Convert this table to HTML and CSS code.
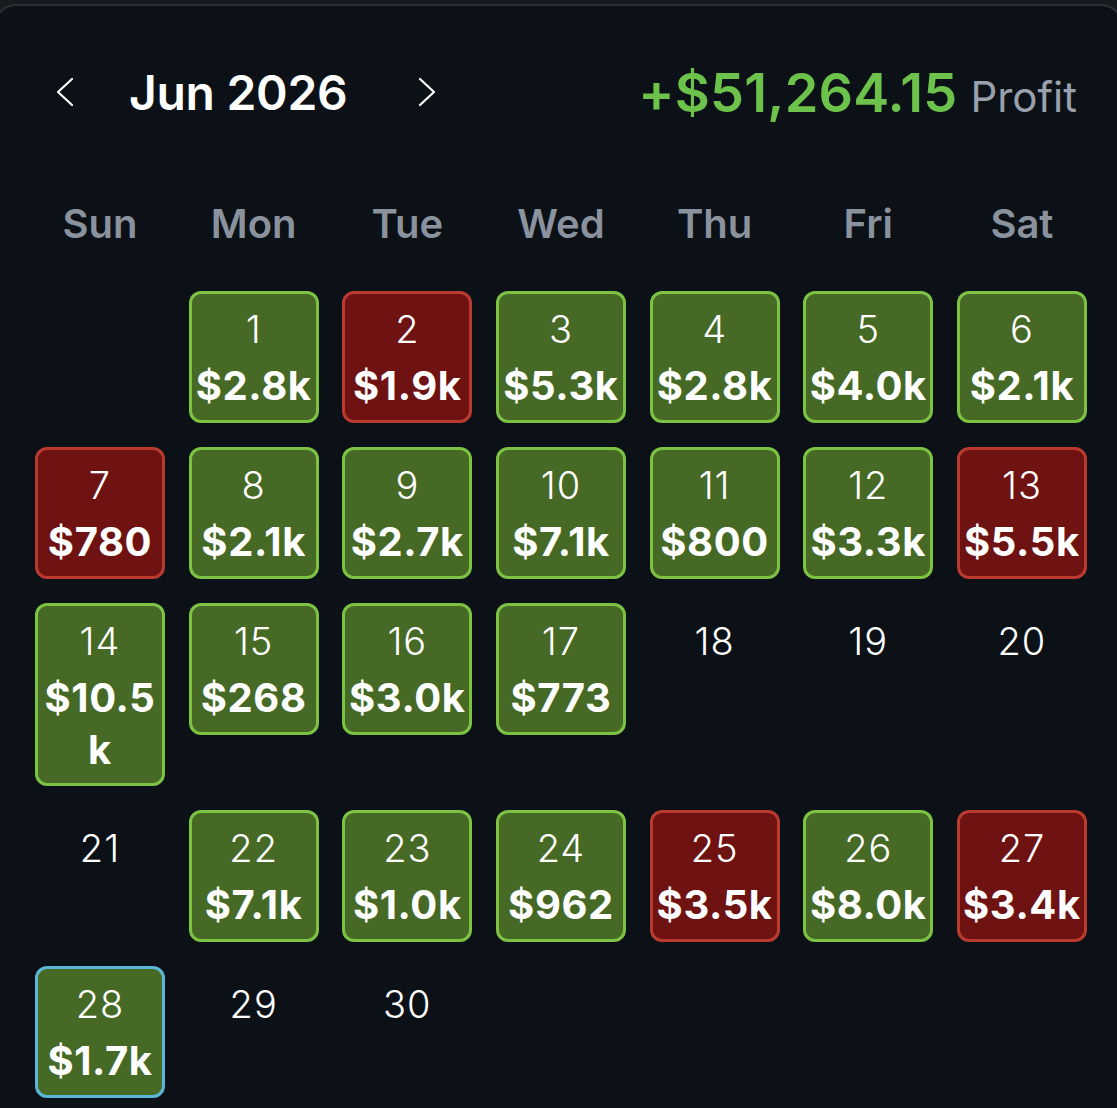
FILE: index.html
```html
<!DOCTYPE html>
<html lang="en">
<head>
<meta charset="utf-8">
<title>Jun 2026 Calendar</title>
<link rel="stylesheet" href="styles.css">
</head>
<body>
<div class="card">
  <header class="head">
    <div class="nav">
      <button class="chev" aria-label="Previous month">
        <svg width="20" height="30" viewBox="0 0 20 30"><polyline points="17,2 3,15 17,28" fill="none" stroke="#fff" stroke-width="2.2" stroke-linecap="round" stroke-linejoin="round"/></svg>
      </button>
      <h1 class="title">Jun 2026</h1>
      <button class="chev" aria-label="Next month">
        <svg width="20" height="30" viewBox="0 0 20 30"><polyline points="3,2 17,15 3,28" fill="none" stroke="#fff" stroke-width="2.2" stroke-linecap="round" stroke-linejoin="round"/></svg>
      </button>
    </div>
    <div class="total"><span class="amount">+$51,264.15</span><span class="label">Profit</span></div>
  </header>

  <div class="weekdays">
    <span>Sun</span><span>Mon</span><span>Tue</span><span>Wed</span><span>Thu</span><span>Fri</span><span>Sat</span>
  </div>

  <div class="grid">
    <div class="day blank"></div>
    <div class="day win"><span class="num">1</span><span class="pnl">$2.8k</span></div>
    <div class="day loss"><span class="num">2</span><span class="pnl">$1.9k</span></div>
    <div class="day win"><span class="num">3</span><span class="pnl">$5.3k</span></div>
    <div class="day win"><span class="num">4</span><span class="pnl">$2.8k</span></div>
    <div class="day win"><span class="num">5</span><span class="pnl">$4.0k</span></div>
    <div class="day win"><span class="num">6</span><span class="pnl">$2.1k</span></div>

    <div class="day loss"><span class="num">7</span><span class="pnl">$780</span></div>
    <div class="day win"><span class="num">8</span><span class="pnl">$2.1k</span></div>
    <div class="day win"><span class="num">9</span><span class="pnl">$2.7k</span></div>
    <div class="day win"><span class="num">10</span><span class="pnl">$7.1k</span></div>
    <div class="day win"><span class="num">11</span><span class="pnl">$800</span></div>
    <div class="day win"><span class="num">12</span><span class="pnl">$3.3k</span></div>
    <div class="day loss"><span class="num">13</span><span class="pnl">$5.5k</span></div>

    <div class="day win"><span class="num">14</span><span class="pnl">$10.5k</span></div>
    <div class="day win"><span class="num">15</span><span class="pnl">$268</span></div>
    <div class="day win"><span class="num">16</span><span class="pnl">$3.0k</span></div>
    <div class="day win"><span class="num">17</span><span class="pnl">$773</span></div>
    <div class="day"><span class="num">18</span></div>
    <div class="day"><span class="num">19</span></div>
    <div class="day"><span class="num">20</span></div>

    <div class="day"><span class="num">21</span></div>
    <div class="day win"><span class="num">22</span><span class="pnl">$7.1k</span></div>
    <div class="day win"><span class="num">23</span><span class="pnl">$1.0k</span></div>
    <div class="day win"><span class="num">24</span><span class="pnl">$962</span></div>
    <div class="day loss"><span class="num">25</span><span class="pnl">$3.5k</span></div>
    <div class="day win"><span class="num">26</span><span class="pnl">$8.0k</span></div>
    <div class="day loss"><span class="num">27</span><span class="pnl">$3.4k</span></div>

    <div class="day win today"><span class="num">28</span><span class="pnl">$1.7k</span></div>
    <div class="day"><span class="num">29</span></div>
    <div class="day"><span class="num">30</span></div>
  </div>
</div>
</body>
</html>
```

FILE: styles.css
```css
* { box-sizing: border-box; }

html, body {
  margin: 0;
  padding: 0;
  background: #171a1f;
  overflow: hidden;
}

body {
  font-family: Inter, "Noto Sans", "Liberation Sans", sans-serif;
  color: #fff;
  padding-top: 4px;
}

.card {
  margin: 0 -6px;
  min-height: 1200px;
  background: #0c1117;
  border: 2px solid #2b3036;
  border-radius: 22px;
  padding: 0 36px 0 39px;
}

.head {
  display: flex;
  align-items: center;
  justify-content: space-between;
  height: 180px;
  padding: 0 8px 0 20px;
  margin-top: -4px;
}

.nav {
  display: flex;
  align-items: center;
}

.chev {
  background: none;
  border: 0;
  padding: 0;
  width: 20px;
  height: 30px;
  display: flex;
}

.title {
  margin: 0 70px 0 54px;
  font-size: 48px;
  font-weight: 600;
  letter-spacing: -0.3px;
}

.total {
  display: flex;
  align-items: baseline;
  gap: 13px;
}

.amount {
  color: #6cc24a;
  font-size: 54px;
  font-weight: 600;
  letter-spacing: 0.2px;
}

.label {
  color: #9aa1ac;
  font-size: 42px;
  font-weight: 400;
}

.weekdays {
  display: grid;
  grid-template-columns: repeat(7, 130px);
  column-gap: 23.67px;
  margin-top: -6px;
  height: 115px;
}

.weekdays span {
  text-align: center;
  color: #8a929d;
  font-size: 40px;
  font-weight: 600;
  line-height: 96px;
}

.grid {
  display: grid;
  grid-template-columns: repeat(7, 130px);
  column-gap: 23.67px;
  row-gap: 24px;
  align-items: start;
}

.day {
  display: flex;
  flex-direction: column;
  align-items: center;
  border: 3px solid transparent;
  border-radius: 12px;
  padding: 6px 2px 7px;
  min-height: 132px;
  text-align: center;
}

.num {
  font-size: 38px;
  font-weight: 300;
  line-height: 59px;
  letter-spacing: 1px;
}

.pnl {
  font-size: 40px;
  font-weight: 700;
  line-height: 52px;
  word-break: break-all;
  letter-spacing: 0.6px;
  margin-top: 1px;
}

.win {
  background: #466a26;
  border-color: #7cc243;
}

.loss {
  background: #6f1212;
  border-color: #bb3a2f;
}

.today {
  border-color: #5cb6d8;
}
```
